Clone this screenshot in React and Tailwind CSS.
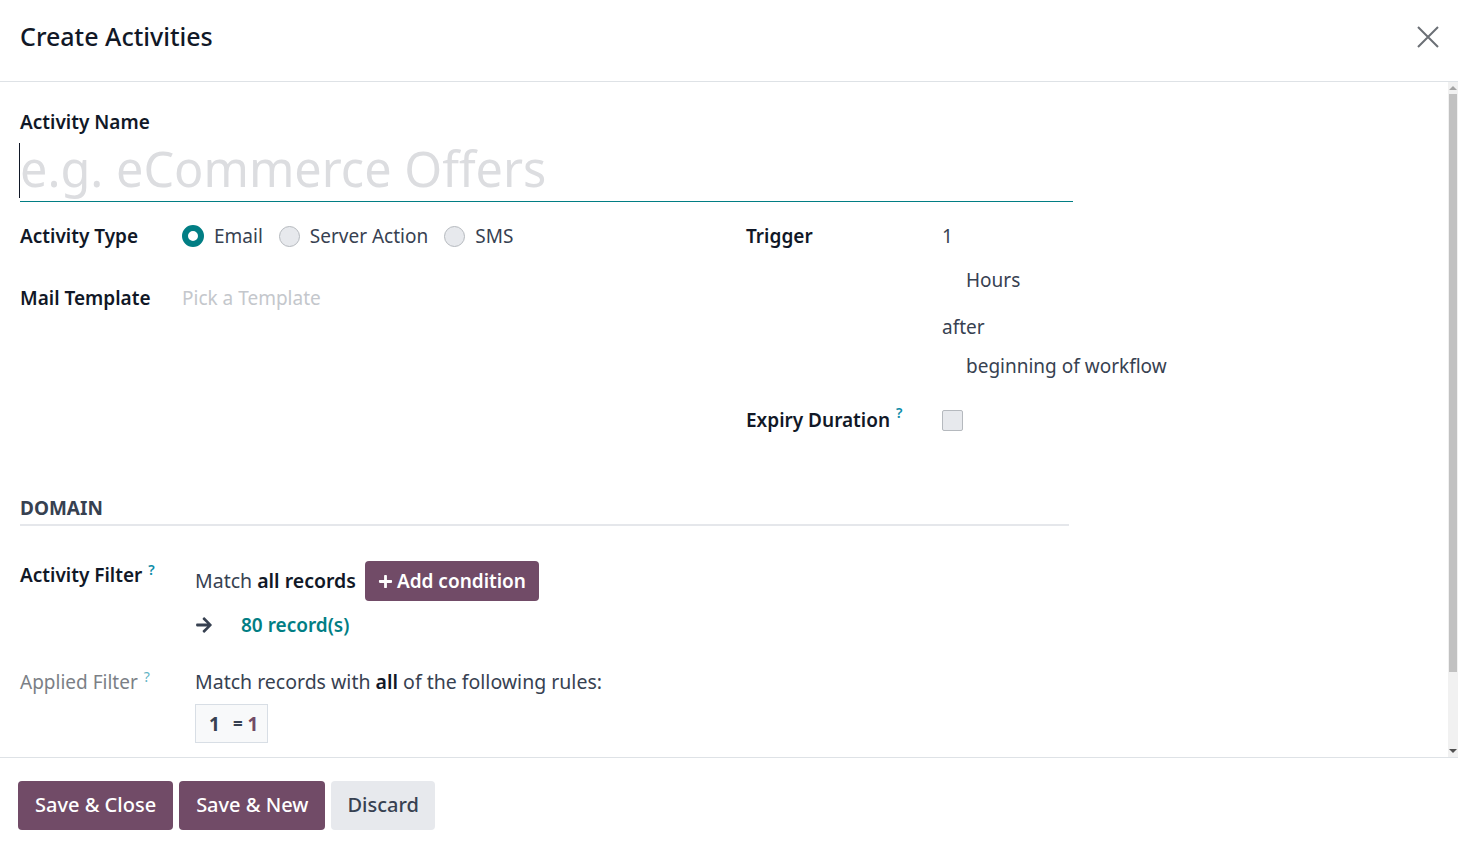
import React from "react";
import { FaPlus, FaArrowRight } from "react-icons/fa";

const font = { fontFamily: '"Noto Sans", "Open Sans", sans-serif' };

const Radio = ({ checked, label }) => (
  <label className="flex items-center gap-[10px] mr-[16px]">
    {checked ? (
      <span className="w-[22px] h-[22px] rounded-full border-[6px] border-[#017e84] bg-white" />
    ) : (
      <span className="w-[21px] h-[21px] rounded-full border border-[#b5b9be] bg-[#e7e9ed]" />
    )}
    <span className="text-[#374151]">{label}</span>
  </label>
);

const Help = ({ light }) => (
  <sup className={"ml-[6px] text-[14px] " + (light ? "text-[#5fb3c4]" : "text-[#0d8ca8]")}>?</sup>
);

const App = () => {
  return (
    <div className="h-[853px] w-full flex flex-col bg-white text-[19px] text-[#374151]" style={font}>
      {/* header */}
      <div className="h-[82px] shrink-0 flex items-center justify-between pl-[20px] pr-[18px] border-b border-[#dee2e6]">
        <h4 className="text-[25px] font-medium text-[#111827] -mt-[8px]">Create Activities</h4>
        <svg width="24" height="24" viewBox="0 0 24 24" className="-mt-[7px]">
          <path d="M2 2 L22 22 M22 2 L2 22" stroke="#6b6f75" strokeWidth="2" />
        </svg>
      </div>

      {/* body */}
      <div className="flex-1 flex min-h-0">
        <div className="flex-1 pl-[20px] pt-[27px]">
          <div className="w-[1053px]">
            <div className="font-semibold text-[#111827] leading-[26px]">Activity Name</div>
            <div className="mt-[6px] h-[61px] border-b border-[#017e84] flex items-center relative">
              <span className="absolute left-[-1px] top-[2px] h-[55px] w-px bg-[#111827]" />
              <span className="text-[48.6px] leading-none text-[#dcdde0] -mt-[6px]">e.g. eCommerce Offers</span>
            </div>
          </div>

          <div className="flex mt-[20px] whitespace-nowrap">
            {/* left group */}
            <div className="w-[726px] shrink-0">
              <div className="flex items-center h-[28px]">
                <div className="w-[162px] font-semibold text-[#111827]">Activity Type</div>
                <Radio checked label="Email" />
                <Radio label="Server Action" />
                <Radio label="SMS" />
              </div>
              <div className="flex items-center h-[28px] mt-[34px]">
                <div className="w-[162px] font-semibold text-[#111827]">Mail Template</div>
                <div className="text-[#c4c7cc]">Pick a Template</div>
              </div>
            </div>
            {/* right group */}
            <div className="shrink-0">
              <div className="flex">
                <div className="w-[196px] shrink-0 font-semibold text-[#111827] h-[28px] flex items-center">Trigger</div>
                <div className="flex flex-col">
                  <div className="h-[28px] flex items-center">1</div>
                  <div className="h-[28px] flex items-center mt-[16px] ml-[24px]">Hours</div>
                  <div className="h-[28px] flex items-center mt-[19px]">after</div>
                  <div className="h-[28px] flex items-center mt-[11px] ml-[24px]">beginning of workflow</div>
                </div>
              </div>
              <div className="flex items-center mt-[26px]">
                <div className="w-[196px] shrink-0 font-semibold text-[#111827] flex items-center">
                  Expiry Duration<Help />
                </div>
                <span className="w-[21px] h-[21px] border border-[#b5b9be] bg-[#e7e9ed] rounded-[2px]" />
              </div>
            </div>
          </div>

          <div className="mt-[59px] w-[1049px] border-b-2 border-[#e5e7eb] pb-[2px]">
            <div className="font-bold text-[#374151] text-[19px] uppercase">Domain</div>
          </div>

          <div className="flex mt-[35px]">
            <div className="w-[175px] shrink-0 font-semibold text-[#111827]">
              Activity Filter<Help />
            </div>
            <div className="flex flex-col">
              <div className="flex items-center">
                <span className="text-[19.5px]">
                  Match <span className="font-semibold text-[#111827]">all records</span>
                </span>
                <button className="ml-[9px] h-[40px] px-[13px] rounded-[4px] bg-[#714b67] text-white font-semibold flex items-center gap-[4px]">
                  <FaPlus className="w-[15px] h-[15px]" />
                  Add condition
                </button>
              </div>
              <div className="flex items-center mt-[8px] h-[32px]">
                <FaArrowRight className="w-[18px] h-[18px] text-[#374151]" />
                <span className="ml-[28px] font-semibold text-[#017e84]">80 record(s)</span>
              </div>
            </div>
          </div>

          <div className="flex mt-[26px]">
            <div className="w-[175px] shrink-0 text-[#7b7f86] pt-[1px]">
              Applied Filter<Help light />
            </div>
            <div className="flex flex-col">
              <div className="text-[19.5px]">
                Match records with <span className="font-semibold text-[#111827]">all</span> of the following rules:
              </div>
              <div className="mt-[8px] w-[73px] h-[39px] border border-[#d8dee5] bg-[#f8f9fa] flex items-center pl-[13px] font-bold">
                <span className="text-[#374151]">1</span>
                <span className="ml-[13px] text-[#374151] text-[17px]">=</span>
                <span className="ml-[5px] text-[#714b67]">1</span>
              </div>
            </div>
          </div>
        </div>

        {/* scrollbar */}
        <div className="w-[10px] shrink-0 bg-[#f1f1f1] flex flex-col items-center">
          <div className="h-[12px] flex items-center">
            <span className="w-0 h-0 border-l-[4px] border-r-[4px] border-b-[4px] border-l-transparent border-r-transparent border-b-[#a3a3a3]" />
          </div>
          <div className="w-[8px] h-[578px] bg-[#c1c1c1]" />
          <div className="flex-1" />
          <div className="h-[12px] flex items-center">
            <span className="w-0 h-0 border-l-[4px] border-r-[4px] border-t-[4px] border-l-transparent border-r-transparent border-t-[#505050]" />
          </div>
        </div>
      </div>

      {/* footer */}
      <div className="h-[96px] shrink-0 border-t border-[#dee2e6] flex items-center gap-[6px] pl-[18px] pb-[1px]">
        <button className="h-[49px] px-[17px] rounded-[4px] bg-[#714b67] text-white font-medium text-[20px]">Save &amp; Close</button>
        <button className="h-[49px] px-[17px] rounded-[4px] bg-[#714b67] text-white font-medium text-[20px]">Save &amp; New</button>
        <button className="h-[49px] px-[16px] rounded-[4px] bg-[#e7e9ed] text-[#374151] font-medium text-[20px]">Discard</button>
      </div>
    </div>
  );
};

export default App;
